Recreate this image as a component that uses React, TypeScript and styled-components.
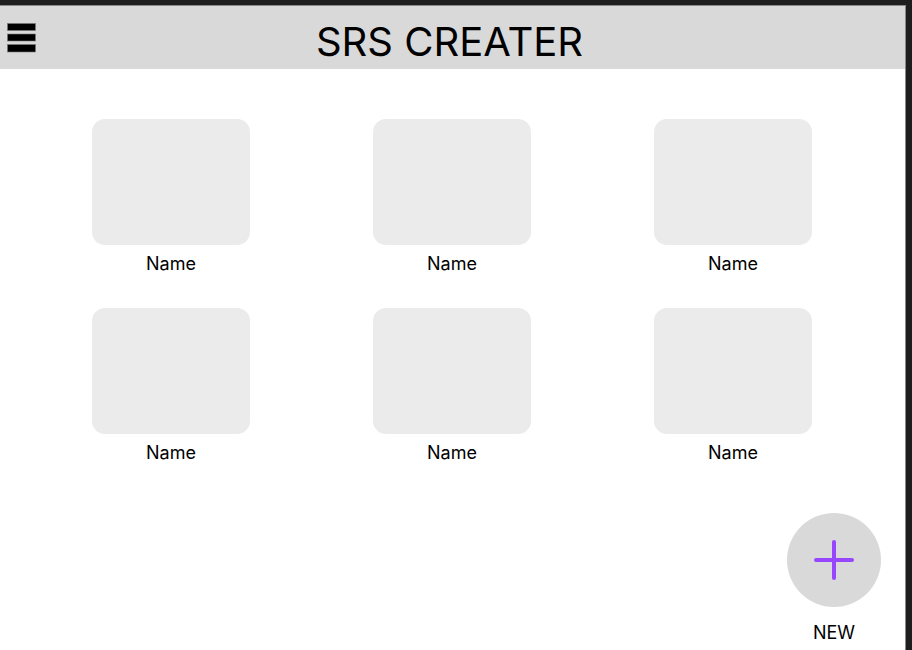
import React from "react";
import styled, { createGlobalStyle } from "styled-components";

const Global = createGlobalStyle`
  html, body {
    margin: 0;
    padding: 0;
    background: #1e1e1e;
    height: 650px;
    overflow: hidden;
  }
  * { box-sizing: border-box; }
`;

const Frame = styled.div`
  margin-top: 5px;
  width: 906px;
  height: 645px;
  background: #ffffff;
  border-top: 1px solid #8a8a8a;
  border-right: 1px solid #8a8a8a;
  font-family: Inter, "Liberation Sans", sans-serif;
  color: #000;
  display: flex;
  flex-direction: column;
`;

const Header = styled.header`
  height: 63px;
  background: #d9d9d9;
  display: grid;
  grid-template-columns: 1fr auto 1fr;
  align-items: center;
`;

const MenuButton = styled.div`
  padding: 1px 0 0 7px;
  display: flex;
  align-items: center;
`;

const Title = styled.h1`
  margin: 0 6px 0 0;
  padding-top: 9px;
  font-size: 40px;
  font-weight: 400;
  letter-spacing: 0;
  line-height: 1;
`;

const Grid = styled.div`
  display: grid;
  grid-template-columns: repeat(3, 158px);
  column-gap: 123px;
  row-gap: 33px;
  padding: 50px 0 0 92px;
`;

const Item = styled.div`
  display: flex;
  flex-direction: column;
  align-items: center;
  gap: 8px;
`;

const Thumb = styled.div`
  width: 158px;
  height: 126px;
  border-radius: 13px;
  background: #ebebeb;
`;

const Label = styled.span`
  font-size: 18px;
  line-height: 22px;
`;

const FabRow = styled.div`
  display: flex;
  justify-content: flex-end;
  padding: 49px 24px 0 0;
`;

const FabWrap = styled.div`
  display: flex;
  flex-direction: column;
  align-items: center;
  gap: 15px;
`;

const Fab = styled.button`
  width: 94px;
  height: 94px;
  border-radius: 50%;
  border: none;
  background: #d9d9d9;
  display: flex;
  align-items: center;
  justify-content: center;
  padding: 0;
  cursor: pointer;
`;

const Hamburger = () => (
  <svg width="30" height="31" viewBox="0 0 30 31">
    <rect x="0.5" y="0.5" width="28" height="7" fill="#000" stroke="#7a7a7a" strokeWidth="0.6" />
    <rect x="0.5" y="11" width="28" height="7" fill="#000" stroke="#7a7a7a" strokeWidth="0.6" />
    <rect x="0.5" y="21.5" width="28" height="7.5" fill="#000" stroke="#7a7a7a" strokeWidth="0.6" />
  </svg>
);

const Plus = () => (
  <svg width="40" height="40" viewBox="0 0 40 40">
    <path d="M20 2 V38 M2 20 H38" stroke="#9747ff" strokeWidth="4" strokeLinecap="round" fill="none" />
  </svg>
);

const names = ["Name", "Name", "Name", "Name", "Name", "Name"];

export default function App() {
  return (
    <>
      <Global />
      <Frame>
        <Header>
          <MenuButton>
            <Hamburger />
          </MenuButton>
          <Title>SRS CREATER</Title>
          <div />
        </Header>
        <Grid>
          {names.map((n, i) => (
            <Item key={i}>
              <Thumb />
              <Label>{n}</Label>
            </Item>
          ))}
        </Grid>
        <FabRow>
          <FabWrap>
            <Fab aria-label="New">
              <Plus />
            </Fab>
            <Label>NEW</Label>
          </FabWrap>
        </FabRow>
      </Frame>
    </>
  );
}
